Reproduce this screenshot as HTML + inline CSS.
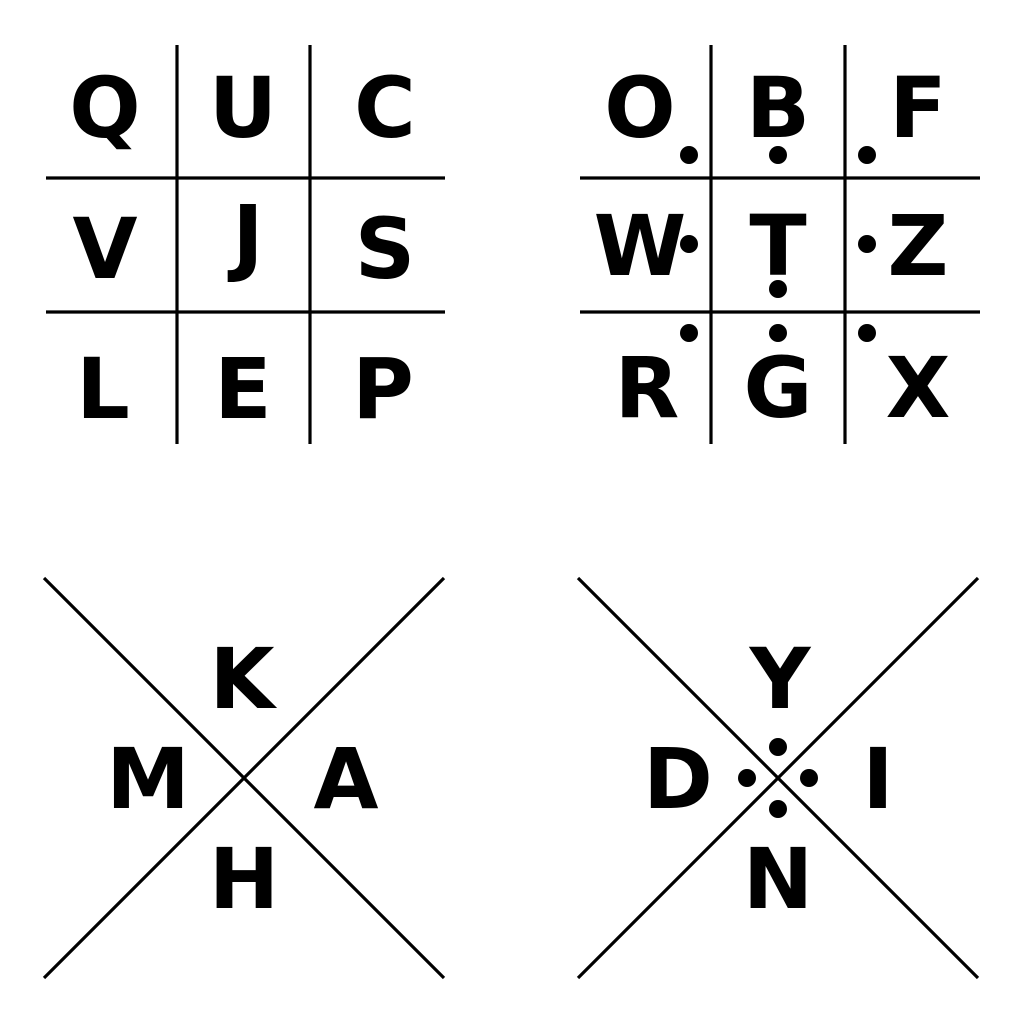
<!DOCTYPE html>
<html><head><style>html,body{margin:0;padding:0;background:#fff}svg{display:block}</style></head>
<body>
<svg width="1024" height="1024" viewBox="0 0 1024 1024" xmlns="http://www.w3.org/2000/svg">
<rect width="1024" height="1024" fill="#fff"/>
<g stroke="#000" stroke-width="3.2">
<line x1="177" y1="45" x2="177" y2="444"/>
<line x1="310" y1="45" x2="310" y2="444"/>
<line x1="46" y1="178" x2="445" y2="178"/>
<line x1="46" y1="312" x2="445" y2="312"/>
<line x1="711" y1="45" x2="711" y2="444"/>
<line x1="845" y1="45" x2="845" y2="444"/>
<line x1="580" y1="178" x2="980" y2="178"/>
<line x1="580" y1="312" x2="980" y2="312"/>
<line x1="44" y1="578" x2="444" y2="978"/>
<line x1="444" y1="578" x2="44" y2="978"/>
<line x1="578" y1="578" x2="978" y2="978"/>
<line x1="978" y1="578" x2="578" y2="978"/>
</g>
<g font-family="DejaVu Sans, sans-serif" font-weight="bold" font-size="84" text-anchor="middle" fill="#000">
<text x="105" y="137">Q</text><text x="243" y="137">U</text><text x="385" y="137">C</text>
<text x="105" y="278">V</text><text x="248" y="265">J</text><text x="385" y="278">S</text>
<text x="103" y="418">L</text><text x="243" y="418">E</text><text x="383" y="418">P</text>
<text x="640" y="137">O</text><text x="778" y="137">B</text><text x="918" y="137">F</text>
<text x="640" y="275">W</text><text x="778" y="275">T</text><text x="918" y="275">Z</text>
<text x="647" y="417">R</text><text x="778" y="417">G</text><text x="918" y="417">X</text>
<text x="242" y="708">K</text><text x="148" y="808">M</text><text x="346" y="808">A</text><text x="244" y="908">H</text>
<text x="780" y="708">Y</text><text x="678" y="808">D</text><text x="878" y="808">I</text><text x="778" y="908">N</text>
</g>
<g fill="#000">
<circle cx="689" cy="155" r="9"/><circle cx="778" cy="155" r="9"/><circle cx="867" cy="155" r="9"/>
<circle cx="689" cy="244" r="9"/><circle cx="778" cy="289" r="9"/><circle cx="867" cy="244" r="9"/>
<circle cx="689" cy="333" r="9"/><circle cx="778" cy="333" r="9"/><circle cx="867" cy="333" r="9"/>
<circle cx="778" cy="747" r="9"/><circle cx="747" cy="778" r="9"/><circle cx="809" cy="778" r="9"/><circle cx="778" cy="809" r="9"/>
</g>
</svg>
</body></html>
